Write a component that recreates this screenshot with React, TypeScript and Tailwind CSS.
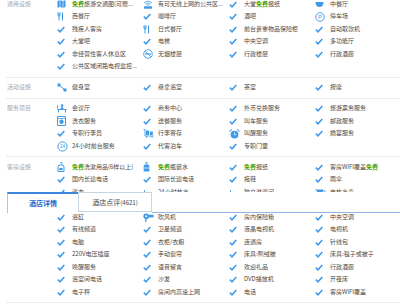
import type { ReactNode } from "react";

const BLUE = "#3f9be8";

function Check() {
  return (
    <svg width="8" height="7" viewBox="0 0 8 7">
      <path d="M0.8 3.6 L3 5.8 L7.3 0.9" fill="none" stroke={BLUE} strokeWidth="1.5" />
    </svg>
  );
}

function Icon({ name }: { name?: string }) {
  switch (name) {
    case "map":
      return (
        <svg width="9" height="8" viewBox="0 0 9 8">
          <path d="M0.5 1 L3 0.2 L6 1 L8.5 0.2 L8.5 7 L6 7.8 L3 7 L0.5 7.8 Z" fill={BLUE} />
          <path d="M3 0.5 V7 M6 1 V7.6" stroke="#fff" strokeWidth="0.6" />
        </svg>
      );
    case "wifi":
      return (
        <svg width="10" height="9" viewBox="0 0 10 9">
          <path d="M1 3 Q5 -0.5 9 3 M2.4 4.2 Q5 2 7.6 4.2 M3.8 5.3 Q5 4.5 6.2 5.3" fill="none" stroke={BLUE} strokeWidth="0.8" />
          <rect x="1" y="6.3" width="8" height="2.4" fill={BLUE} />
        </svg>
      );
    case "fork":
      return (
        <svg width="8" height="9" viewBox="0 0 8 9">
          <path d="M2 0.5 V8.5 M5.5 0.5 V8.5 M1 0.5 V3 Q1 4 2 4 Q3 4 3 3 V0.5" fill="none" stroke={BLUE} strokeWidth="1" />
        </svg>
      );
    case "bowl":
      return (
        <svg width="9" height="8" viewBox="0 0 9 8">
          <path d="M0.5 2 H8.5 Q8.5 7 4.5 7 Q0.5 7 0.5 2 Z" fill={BLUE} />
        </svg>
      );
    case "parking":
      return (
        <svg width="10" height="10" viewBox="0 0 10 10">
          <circle cx="5" cy="5" r="4.3" fill="none" stroke={BLUE} strokeWidth="0.9" />
          <text x="5" y="7.2" textAnchor="middle" fontSize="6" fill={BLUE} fontFamily="Liberation Sans, sans-serif">P</text>
        </svg>
      );
    case "nosmoke":
      return (
        <svg width="10" height="10" viewBox="0 0 10 10">
          <circle cx="5" cy="5" r="4.3" fill="none" stroke={BLUE} strokeWidth="0.9" />
          <path d="M2 5 H8" stroke={BLUE} strokeWidth="1.2" />
          <path d="M2 2 L8 8" stroke={BLUE} strokeWidth="0.8" />
        </svg>
      );
    case "gym":
      return (
        <svg width="10" height="9" viewBox="0 0 10 9">
          <rect x="0.5" y="0.5" width="3" height="3" fill={BLUE} />
          <rect x="6.5" y="5.5" width="3" height="3" fill={BLUE} />
          <path d="M2.5 2.5 L7.5 6.5" stroke={BLUE} strokeWidth="1" />
        </svg>
      );
    case "meeting":
      return (
        <svg width="10" height="9" viewBox="0 0 10 9">
          <circle cx="5" cy="1.6" r="1.3" fill={BLUE} />
          <path d="M3.5 5 L4 3.3 H6 L6.5 5" fill={BLUE} />
          <path d="M0.5 5.5 H9.5 M1.5 5.5 V8.5 M8.5 5.5 V8.5" stroke={BLUE} strokeWidth="1" fill="none" />
          <path d="M0.5 1 V5" stroke={BLUE} strokeWidth="0.8" />
        </svg>
      );
    case "wash":
      return (
        <svg width="9" height="10" viewBox="0 0 9 10">
          <rect x="0.5" y="0.5" width="8" height="9" rx="0.5" fill="none" stroke={BLUE} strokeWidth="1" />
          <circle cx="4.5" cy="5.8" r="2.2" fill={BLUE} />
          <path d="M1 2.5 H8" stroke={BLUE} strokeWidth="0.8" />
        </svg>
      );
    case "luggage":
      return (
        <svg width="11" height="9" viewBox="0 0 11 9">
          <path d="M0.5 0.5 H2 V7 H10.5" fill="none" stroke={BLUE} strokeWidth="0.9" />
          <rect x="3" y="1.5" width="3" height="4.5" fill={BLUE} />
          <rect x="6.8" y="2.5" width="3" height="3.5" fill={BLUE} />
          <circle cx="3.5" cy="8" r="0.8" fill={BLUE} />
          <circle cx="9" cy="8" r="0.8" fill={BLUE} />
        </svg>
      );
    case "clock24":
      return (
        <svg width="11" height="11" viewBox="0 0 11 11">
          <circle cx="5.5" cy="5.5" r="4.6" fill="none" stroke={BLUE} strokeWidth="1" />
          <text x="5.5" y="7.3" textAnchor="middle" fontSize="4.6" fill={BLUE} fontFamily="Liberation Sans, sans-serif">24</text>
        </svg>
      );
    case "alarm":
      return (
        <svg width="11" height="10" viewBox="0 0 11 10">
          <circle cx="5.5" cy="5.6" r="3.9" fill={BLUE} />
          <path d="M5.5 3.3 V5.8 H7.2" fill="none" stroke="#fff" strokeWidth="0.8" />
          <path d="M0.6 2.6 Q1 0.6 3 0.6 Z M10.4 2.6 Q10 0.6 8 0.6 Z" fill={BLUE} stroke={BLUE} strokeWidth="0.6" />
        </svg>
      );
    case "shampoo":
      return (
        <svg width="8" height="10" viewBox="0 0 8 10">
          <path d="M3 0.5 H5 V2.5" fill="none" stroke={BLUE} strokeWidth="0.8" />
          <path d="M2 3 H6 L7 5 V9.5 H1 V5 Z" fill="none" stroke={BLUE} strokeWidth="1" />
          <rect x="2.3" y="6" width="3.4" height="2.2" fill={BLUE} />
        </svg>
      );
    case "water":
      return (
        <svg width="7" height="10" viewBox="0 0 7 10">
          <rect x="2.4" y="0.3" width="2.2" height="1.4" fill={BLUE} />
          <path d="M1.5 2.5 H5.5 L6.3 4 V9.5 H0.7 V4 Z" fill={BLUE} />
          <path d="M1 6 H6" stroke="#fff" strokeWidth="0.7" />
        </svg>
      );
    case "dryer":
      return (
        <svg width="11" height="9" viewBox="0 0 11 9">
          <circle cx="3.2" cy="3.2" r="2.8" fill={BLUE} />
          <rect x="5" y="1.8" width="5.5" height="2.6" fill={BLUE} />
          <path d="M3.2 5.5 L2.6 8.8" stroke={BLUE} strokeWidth="1.3" />
          <circle cx="3.2" cy="3.2" r="1" fill="#fff" />
        </svg>
      );
    case "slipper":
      return (
        <svg width="11" height="8" viewBox="0 0 11 8">
          <path d="M0.5 7 Q0.5 5 3 5 H9 Q10.5 5 10.5 6.5 V7.5 H0.5 Z" fill={BLUE} />
          <path d="M1.5 2 V5" stroke={BLUE} strokeWidth="0.9" />
        </svg>
      );
    case "kettle":
      return (
        <svg width="11" height="8" viewBox="0 0 11 8">
          <path d="M2 1.5 H8 V7.5 H2 Z" fill={BLUE} />
          <path d="M0.3 1 L2 3 M8 2.5 Q10.5 2.5 10.5 4.5 Q10.5 6 8 6" fill="none" stroke={BLUE} strokeWidth="0.9" />
        </svg>
      );
    default:
      return <Check />;
  }
}

type Item = { t: string; i?: string };

const sections: { label: string; items: Item[] }[] = [
  {
    label: "通用设施",
    items: [
      { t: "免费旅游交通图(可赠...", i: "map" },
      { t: "有可无线上网的公共区...", i: "wifi" },
      { t: "大堂免费报纸" },
      { t: "中餐厅", i: "bowl" },
      { t: "西餐厅", i: "fork" },
      { t: "咖啡厅" },
      { t: "酒吧" },
      { t: "停车场", i: "parking" },
      { t: "残疾人客房" },
      { t: "日式餐厅", i: "fork" },
      { t: "前台贵重物品保险柜" },
      { t: "自动取款机" },
      { t: "大堂吧" },
      { t: "电梯" },
      { t: "中央空调" },
      { t: "多功能厅" },
      { t: "非经营性客人休息区" },
      { t: "无烟楼层", i: "nosmoke" },
      { t: "行政楼层" },
      { t: "行政酒廊" },
      { t: "公共区域闭路电视监控..." },
    ],
  },
  {
    label: "活动设施",
    items: [
      { t: "健身室", i: "gym" },
      { t: "桑拿浴室" },
      { t: "茶室" },
      { t: "按摩" },
    ],
  },
  {
    label: "服务项目",
    items: [
      { t: "会议厅", i: "meeting" },
      { t: "商务中心" },
      { t: "外币兑换服务" },
      { t: "旅游票务服务" },
      { t: "洗衣服务", i: "wash" },
      { t: "送餐服务" },
      { t: "叫车服务" },
      { t: "邮政服务" },
      { t: "专职行李员" },
      { t: "行李寄存", i: "luggage" },
      { t: "叫醒服务", i: "alarm" },
      { t: "婚宴服务" },
      { t: "24小时前台服务", i: "clock24" },
      { t: "代客泊车" },
      { t: "专职门童" },
    ],
  },
  {
    label: "客房设施",
    items: [
      { t: "免费洗漱用品(6样以上)", i: "shampoo" },
      { t: "免费瓶装水", i: "water" },
      { t: "免费报纸" },
      { t: "客房WIFI覆盖免费" },
      { t: "国内长途电话" },
      { t: "国际长途电话" },
      { t: "拖鞋" },
      { t: "雨伞" },
      { t: "浴衣" },
      { t: "24小时热水", i: "slipper" },
      { t: "独立淋浴间", i: "slipper" },
      { t: "电热水壶", i: "kettle" },
      { t: "迷你吧" },
      { t: "熨衣设备" },
      { t: "书桌" },
      { t: "空调" },
      { t: "浴缸" },
      { t: "吹风机", i: "dryer" },
      { t: "房内保险箱" },
      { t: "中央空调" },
      { t: "有线频道" },
      { t: "卫星频道" },
      { t: "液晶电视机" },
      { t: "电视机" },
      { t: "电脑" },
      { t: "衣柜/衣橱" },
      { t: "连通房" },
      { t: "针线包" },
      { t: "220V电压插座" },
      { t: "手动窗帘" },
      { t: "床具:鸭绒被" },
      { t: "床具:毯子或被子" },
      { t: "唤醒服务" },
      { t: "语音留言" },
      { t: "欢迎礼品" },
      { t: "行政酒廊" },
      { t: "浴室间电话" },
      { t: "沙发" },
      { t: "DVD播放机" },
      { t: "开夜床" },
      { t: "电子秤" },
      { t: "房间内高速上网" },
      { t: "电话" },
      { t: "客房WIFI覆盖" },
    ],
  },
];

function Label({ text }: { text: string }) {
  const parts = text.split("免费");
  const out: ReactNode[] = [];
  parts.forEach((p, idx) => {
    if (idx > 0)
      out.push(
        <span key={"f" + idx} className="font-bold text-[#3aa10a]">
          免费
        </span>
      );
    if (p) out.push(<span key={"p" + idx}>{p}</span>);
  });
  return <>{out}</>;
}

export default function App() {
  return (
    <div
      className="relative w-[400px] h-[308px] overflow-hidden bg-white text-[#4a4a4a]"
      style={{ fontFamily: '"Noto Sans CJK SC", "Noto Sans", sans-serif' }}
    >
      <div className="-mt-[5.75px]">
        {sections.map((s) => (
          <div key={s.label} className="flex ml-[7px] pt-[3.5px] pb-[4px] border-b border-dotted border-[#dcdcdc]">
            <div className="w-[50px] shrink-0 text-[6px] leading-[12.5px] text-[#a8a8a8]">{s.label}</div>
            <div className="grid grid-cols-[86px_86px_86px_86px]">
              {s.items.map((it, idx) => (
                <div key={idx} className="flex items-center h-[12.5px]">
                  <div className="w-[15px] shrink-0 flex items-center">
                    <Icon name={it.i} />
                  </div>
                  <div className="whitespace-nowrap text-[6px] leading-[12.5px]">
                    <Label text={it.t} />
                  </div>
                </div>
              ))}
            </div>
          </div>
        ))}
      </div>

      {/* sticky tab bar */}
      <div className="absolute left-0 right-0 top-[192px] h-[21px] bg-white">
        <div className="flex h-full pl-[7px]">
          <div className="w-[71px] h-full border-t-2 border-l border-[#3c87dd] border-l-[#a9c7ea] flex items-center justify-center text-[7px] font-bold text-[#1c6acb]">
            酒店详情
          </div>
          <div className="w-[74px] h-[20px] border border-[#c7d4e4] flex items-center justify-center text-[7px] text-[#444]">
            酒店点评<span className="text-[6px]">(4621)</span>
          </div>
          <div className="flex-1 h-full border-b border-[#8fb6e6]" />
        </div>
      </div>
    </div>
  );
}
